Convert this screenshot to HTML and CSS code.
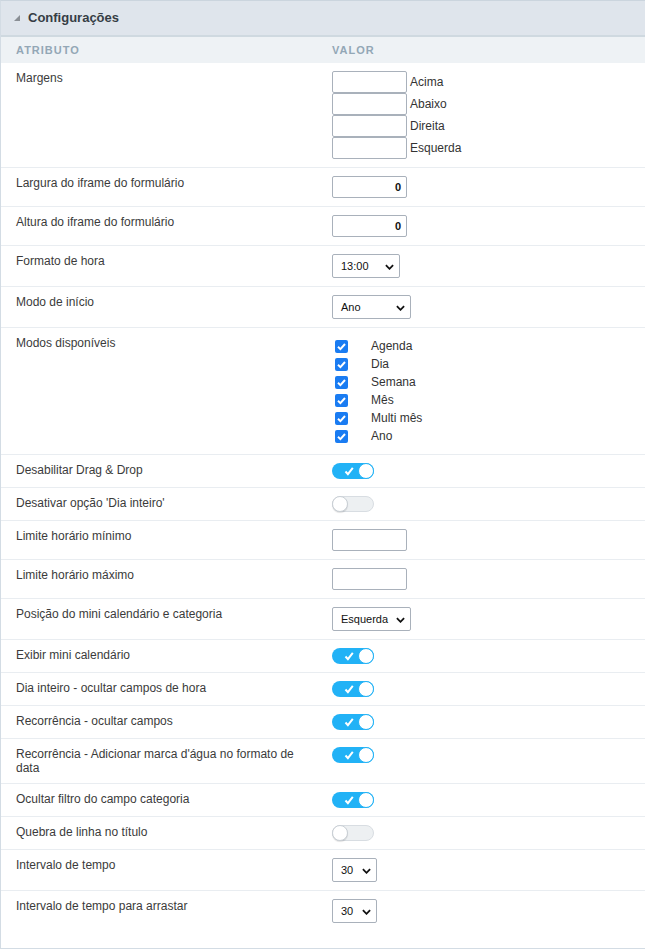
FILE: index.html
```html
<!DOCTYPE html>
<html lang="pt">
<head>
<meta charset="utf-8">
<title>Configurações</title>
<link rel="stylesheet" href="styles.css">
</head>
<body>
<div class="panel">
  <div class="panel-head">
    <span class="tri"></span>
    <span class="panel-title">Configurações</span>
  </div>
  <div class="row thead">
    <div class="cell-l">Atributo</div>
    <div class="cell-v">Valor</div>
  </div>

  <div class="row">
    <div class="cell-l">Margens</div>
    <div class="cell-v">
      <div class="margins">
        <div class="mrow"><span class="inp"></span><span class="mlabel">Acima</span></div>
        <div class="mrow"><span class="inp"></span><span class="mlabel">Abaixo</span></div>
        <div class="mrow"><span class="inp"></span><span class="mlabel">Direita</span></div>
        <div class="mrow"><span class="inp"></span><span class="mlabel">Esquerda</span></div>
      </div>
    </div>
  </div>

  <div class="row">
    <div class="cell-l">Largura do iframe do formulário</div>
    <div class="cell-v"><span class="inp num">0</span></div>
  </div>
  <div class="row">
    <div class="cell-l">Altura do iframe do formulário</div>
    <div class="cell-v"><span class="inp num">0</span></div>
  </div>

  <div class="row">
    <div class="cell-l">Formato de hora</div>
    <div class="cell-v"><span class="sel w68">13:00<svg class="chev" viewBox="0 0 10 6"><path d="M1 1l4 4 4-4" fill="none" stroke="#111" stroke-width="2"/></svg></span></div>
  </div>
  <div class="row">
    <div class="cell-l">Modo de início</div>
    <div class="cell-v"><span class="sel w79">Ano<svg class="chev" viewBox="0 0 10 6"><path d="M1 1l4 4 4-4" fill="none" stroke="#111" stroke-width="2"/></svg></span></div>
  </div>

  <div class="row modos">
    <div class="cell-l">Modos disponíveis</div>
    <div class="cell-v">
      <ul class="checks">
        <li><span class="cb"><svg viewBox="0 0 13 13"><path d="M3 6.8l2.4 2.3L10 4" fill="none" stroke="#fff" stroke-width="2"/></svg></span>Agenda</li>
        <li><span class="cb"><svg viewBox="0 0 13 13"><path d="M3 6.8l2.4 2.3L10 4" fill="none" stroke="#fff" stroke-width="2"/></svg></span>Dia</li>
        <li><span class="cb"><svg viewBox="0 0 13 13"><path d="M3 6.8l2.4 2.3L10 4" fill="none" stroke="#fff" stroke-width="2"/></svg></span>Semana</li>
        <li><span class="cb"><svg viewBox="0 0 13 13"><path d="M3 6.8l2.4 2.3L10 4" fill="none" stroke="#fff" stroke-width="2"/></svg></span>Mês</li>
        <li><span class="cb"><svg viewBox="0 0 13 13"><path d="M3 6.8l2.4 2.3L10 4" fill="none" stroke="#fff" stroke-width="2"/></svg></span>Multi mês</li>
        <li><span class="cb"><svg viewBox="0 0 13 13"><path d="M3 6.8l2.4 2.3L10 4" fill="none" stroke="#fff" stroke-width="2"/></svg></span>Ano</li>
      </ul>
    </div>
  </div>

  <div class="row">
    <div class="cell-l">Desabilitar Drag &amp; Drop</div>
    <div class="cell-v"><span class="tog on"><svg class="tick" viewBox="0 0 10 10"><path d="M1.5 5.5l2.4 2.6L8.8 1.8" fill="none" stroke="#fff" stroke-width="2"/></svg><span class="knob"></span></span></div>
  </div>
  <div class="row">
    <div class="cell-l">Desativar opção 'Dia inteiro'</div>
    <div class="cell-v"><span class="tog off"><span class="knob"></span></span></div>
  </div>

  <div class="row">
    <div class="cell-l">Limite horário mínimo</div>
    <div class="cell-v"><span class="inp"></span></div>
  </div>
  <div class="row">
    <div class="cell-l">Limite horário máximo</div>
    <div class="cell-v"><span class="inp"></span></div>
  </div>

  <div class="row">
    <div class="cell-l">Posição do mini calendário e categoria</div>
    <div class="cell-v"><span class="sel w79">Esquerda<svg class="chev" viewBox="0 0 10 6"><path d="M1 1l4 4 4-4" fill="none" stroke="#111" stroke-width="2"/></svg></span></div>
  </div>

  <div class="row">
    <div class="cell-l">Exibir mini calendário</div>
    <div class="cell-v"><span class="tog on"><svg class="tick" viewBox="0 0 10 10"><path d="M1.5 5.5l2.4 2.6L8.8 1.8" fill="none" stroke="#fff" stroke-width="2"/></svg><span class="knob"></span></span></div>
  </div>
  <div class="row">
    <div class="cell-l">Dia inteiro - ocultar campos de hora</div>
    <div class="cell-v"><span class="tog on"><svg class="tick" viewBox="0 0 10 10"><path d="M1.5 5.5l2.4 2.6L8.8 1.8" fill="none" stroke="#fff" stroke-width="2"/></svg><span class="knob"></span></span></div>
  </div>
  <div class="row">
    <div class="cell-l">Recorrência - ocultar campos</div>
    <div class="cell-v"><span class="tog on"><svg class="tick" viewBox="0 0 10 10"><path d="M1.5 5.5l2.4 2.6L8.8 1.8" fill="none" stroke="#fff" stroke-width="2"/></svg><span class="knob"></span></span></div>
  </div>
  <div class="row">
    <div class="cell-l">Recorrência - Adicionar marca d'água no formato de data</div>
    <div class="cell-v"><span class="tog on"><svg class="tick" viewBox="0 0 10 10"><path d="M1.5 5.5l2.4 2.6L8.8 1.8" fill="none" stroke="#fff" stroke-width="2"/></svg><span class="knob"></span></span></div>
  </div>
  <div class="row">
    <div class="cell-l">Ocultar filtro do campo categoria</div>
    <div class="cell-v"><span class="tog on"><svg class="tick" viewBox="0 0 10 10"><path d="M1.5 5.5l2.4 2.6L8.8 1.8" fill="none" stroke="#fff" stroke-width="2"/></svg><span class="knob"></span></span></div>
  </div>
  <div class="row">
    <div class="cell-l">Quebra de linha no título</div>
    <div class="cell-v"><span class="tog off"><span class="knob"></span></span></div>
  </div>

  <div class="row">
    <div class="cell-l">Intervalo de tempo</div>
    <div class="cell-v"><span class="sel w45">30<svg class="chev" viewBox="0 0 10 6"><path d="M1 1l4 4 4-4" fill="none" stroke="#111" stroke-width="2"/></svg></span></div>
  </div>
  <div class="row last">
    <div class="cell-l">Intervalo de tempo para arrastar</div>
    <div class="cell-v"><span class="sel w45">30<svg class="chev" viewBox="0 0 10 6"><path d="M1 1l4 4 4-4" fill="none" stroke="#111" stroke-width="2"/></svg></span></div>
  </div>
</div>
</body>
</html>
```

FILE: styles.css
```css
* { box-sizing: border-box; }
html, body { margin: 0; padding: 0; background: #fff; }
body {
  font-family: "Liberation Sans", Arial, sans-serif;
  font-size: 12px;
  color: #3b3b3b;
}
.panel {
  width: 645px;
  border-left: 1px solid #d3dce4;
  border-top: 1px solid #cbd5de;
  border-bottom: 1px solid #d3dce4;
  padding-bottom: 17px;
}
.panel-head {
  height: 36px;
  background: #dfe5ec;
  border-bottom: 2px solid #cfd9e0;
  display: flex;
  align-items: center;
  padding-left: 13px;
  padding-bottom: 2px;
}
.tri {
  width: 0; height: 0;
  border-left: 6px solid transparent;
  border-bottom: 6px solid #8a8f95;
  margin-right: 8px;
  margin-top: 1px;
}
.panel-title {
  font-weight: bold;
  font-size: 13px;
  color: #363d45;
}
.row {
  display: grid;
  grid-template-columns: 315px 1fr;
  border-bottom: 1px solid #e9edf1;
  padding: 8px 0;
}
.row.last { border-bottom: none; }
.cell-l {
  padding-left: 15px;
  padding-right: 14px;
  line-height: 14px;
}
.cell-v {
  padding-left: 16px;
  line-height: 14px;
}
.row.thead {
  background: #eef2f5;
  height: 26px;
  padding: 0;
  border-bottom: none;
  align-items: center;
  text-transform: uppercase;
  font-weight: bold;
  font-size: 11px;
  letter-spacing: 1px;
  color: #93a7b6;
}
.inp {
  display: block;
  width: 75px;
  height: 22px;
  border: 1px solid #a9b1bb;
  border-radius: 2px;
  background: #fff;
}
.inp.num {
  text-align: right;
  font-weight: bold;
  font-size: 11px;
  line-height: 20px;
  padding-right: 5px;
  color: #111;
}
.margins { display: flex; flex-direction: column; }
.mrow { display: flex; align-items: center; }
.mlabel { margin-left: 3px; color: #333; }
.sel {
  position: relative;
  display: flex;
  align-items: center;
  height: 24px;
  border: 1px solid #a9b1bb;
  border-radius: 2px;
  padding-left: 8px;
  color: #111;
  font-size: 11px;
  background: #fff;
}
.w68 { width: 68px; }
.w79 { width: 79px; }
.w45 { width: 45px; }
.chev {
  position: absolute;
  right: 5px;
  top: 9px;
  width: 9px;
  height: 6px;
}
.modos { padding-bottom: 9px; }
.checks { list-style: none; margin: 0; padding: 1px 0 0; }
.checks li {
  display: flex;
  align-items: center;
  height: 18px;
  color: #333;
  font-size: 12px;
}
.cb {
  width: 13px;
  height: 13px;
  margin-left: 3px;
  margin-right: 23px;
  background: #1a7cf2;
  border-radius: 2px;
  display: flex;
}
.cb svg { width: 13px; height: 13px; }
.tog {
  position: relative;
  display: block;
  width: 42px;
  height: 16px;
  border-radius: 8px;
}
.tog.on { background: #22b2f6; }
.tog.off { background: #edf0f2; border: 1px solid #d8dde2; }
.tog .knob {
  position: absolute;
  top: 0;
  width: 16px;
  height: 16px;
  border-radius: 50%;
  background: #fff;
}
.tog.on .knob {
  right: 0;
  border: 1.5px solid #22b2f6;
}
.tog.off .knob {
  left: -1px;
  top: -1px;
  border: 1px solid #c9cfd5;
  box-shadow: 0 1px 1px rgba(0,0,0,0.12);
}
.tick {
  position: absolute;
  left: 12px;
  top: 3px;
  width: 10px;
  height: 10px;
}
```
